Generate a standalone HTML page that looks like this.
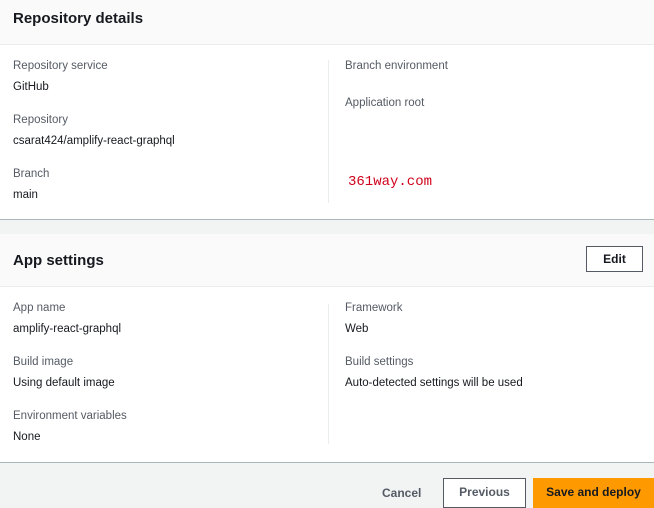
<!DOCTYPE html>
<html><head><style>
body{margin:0;width:654px;height:506px;overflow:hidden;background:#f2f3f3;font-family:"Liberation Sans",sans-serif;position:relative;color:#16191f}
.a{position:absolute}
.hd{background:#fafafa;left:0;width:654px}
.wh{background:#fff;left:0;width:654px}
.t{font-size:15px;font-weight:bold;color:#16191f}
.l{font-size:11.5px;color:#545b64}
.v{font-size:11.5px;color:#16191f}
.div{width:1px;background:#eaeded;left:328px}
.btn{font-size:12px;font-weight:bold;text-align:center;box-sizing:border-box}
</style></head><body>
<div class="a hd" style="top:0;height:44px;border-bottom:1px solid #eaeded"></div>
<div class="a t" style="left:13px;top:10px">Repository details</div>
<div class="a wh" style="top:45px;height:174px;border-bottom:1px solid #aab7b8"></div>
<div class="a l" style="left:13px;top:60px">Repository service</div>
<div class="a v" style="left:13px;top:81px">GitHub</div>
<div class="a l" style="left:13px;top:114px">Repository</div>
<div class="a v" style="left:13px;top:135px">csarat424/amplify-react-graphql</div>
<div class="a l" style="left:13px;top:168px">Branch</div>
<div class="a v" style="left:13px;top:189px">main</div>
<div class="a div" style="top:60px;height:143px"></div>
<div class="a l" style="left:345px;top:60px">Branch environment</div>
<div class="a l" style="left:345px;top:97px">Application root</div>
<div class="a" style="left:348px;top:174px;font-family:'Liberation Mono',monospace;font-size:14px;color:#d0021b">361way.com</div>

<div class="a hd" style="top:234px;height:52px;border-bottom:1px solid #eaeded"></div>
<div class="a t" style="left:13px;top:252px">App settings</div>
<div class="a btn" style="left:586px;top:246px;width:57px;height:26px;border:1px solid #545b64;background:#fff;line-height:24px;color:#16191f">Edit</div>
<div class="a wh" style="top:287px;height:175px;border-bottom:1px solid #aab7b8"></div>
<div class="a l" style="left:13px;top:302px">App name</div>
<div class="a v" style="left:13px;top:323px">amplify-react-graphql</div>
<div class="a l" style="left:13px;top:356px">Build image</div>
<div class="a v" style="left:13px;top:377px">Using default image</div>
<div class="a l" style="left:13px;top:410px">Environment variables</div>
<div class="a v" style="left:13px;top:431px">None</div>
<div class="a div" style="top:304px;height:140px"></div>
<div class="a l" style="left:345px;top:302px">Framework</div>
<div class="a v" style="left:345px;top:323px">Web</div>
<div class="a l" style="left:345px;top:356px">Build settings</div>
<div class="a v" style="left:345px;top:377px">Auto-detected settings will be used</div>

<div class="a btn" style="left:382px;top:486px;color:#545b64">Cancel</div>
<div class="a btn" style="left:443px;top:478px;width:83px;height:30px;border:1px solid #545b64;background:#fff;line-height:26px;color:#545b64">Previous</div>
<div class="a btn" style="left:533px;top:478px;width:121px;height:30px;background:#ff9900;line-height:28px;color:#16191f">Save and deploy</div>
</body></html>
